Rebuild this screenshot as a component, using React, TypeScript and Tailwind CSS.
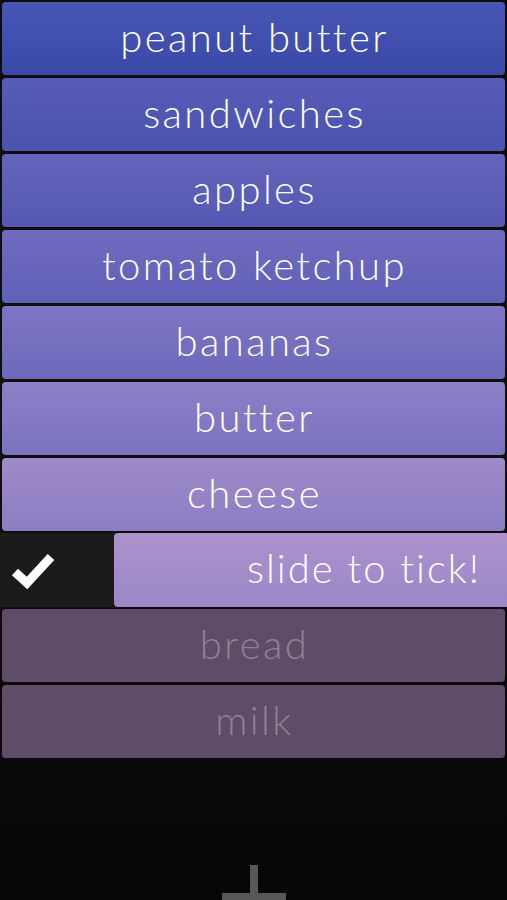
import React from "react";

const rows = [
  { label: "peanut butter", cls: "bg-linear-to-b from-[#4856b4] to-[#3a49a8]" },
  { label: "sandwiches", cls: "bg-linear-to-b from-[#575cb8] to-[#4a53ae]" },
  { label: "apples", cls: "bg-linear-to-b from-[#6563bb] to-[#5558b2]" },
  { label: "tomato ketchup", cls: "bg-linear-to-b from-[#706bbf] to-[#6060b7]" },
  { label: "bananas", cls: "bg-linear-to-b from-[#7e76c3] to-[#6d68bb]" },
  { label: "butter", cls: "bg-linear-to-b from-[#8c80c7] to-[#7b73bf]" },
  { label: "cheese", cls: "bg-linear-to-b from-[#a08ac9] to-[#8b7ec3]" },
];

const font = { fontFamily: "Lato, 'Open Sans', sans-serif" };

export default function App() {
  return (
    <div
      className="h-[900px] w-full overflow-hidden flex flex-col bg-linear-to-b from-[#0d0d0d] via-[#101010] to-[#060606]"
      style={font}
    >
      <div className="flex flex-col gap-[3px] pt-[2px]">
        {rows.map((r) => (
          <div
            key={r.label}
            className={`mx-[2px] h-[73px] rounded-[4px] flex items-center justify-center text-white text-[40px] font-light tracking-[2.4px] pl-[2px] pb-[4px] ${r.cls}`}
          >
            {r.label}
          </div>
        ))}
        <div className="flex h-[74px] -my-[1px]">
          <div className="w-[114px] bg-[#1b1b1b] flex items-center pl-[11px]">
            <svg width="46" height="40" viewBox="0 0 46 40">
              <path d="M4 22 L16 33 L40 7" fill="none" stroke="#ffffff" strokeWidth="9" strokeLinejoin="miter" />
            </svg>
          </div>
          <div className="flex-1 rounded-l-[4px] bg-linear-to-b from-[#ad92cd] to-[#9a88c8] flex items-center justify-end pr-[26px] pb-[4px] text-white text-[40px] font-light tracking-[2px]">
            slide to tick!
          </div>
        </div>
        {["bread", "milk"].map((l) => (
          <div
            key={l}
            className="mx-[2px] h-[73px] rounded-[4px] flex items-center justify-center bg-[#5e4c69] text-[#8b8392] text-[40px] font-light tracking-[2.4px] pl-[2px] pb-[4px]"
          >
            {l}
          </div>
        ))}
      </div>
      <div className="flex-1" />
      <div className="flex justify-center mb-[-29px]">
        <svg width="64" height="64" viewBox="0 0 64 64" className="ml-[1px]">
          <rect x="28" y="0" width="8" height="64" fill="#575757" />
          <rect x="0" y="28" width="64" height="8" fill="#575757" />
        </svg>
      </div>
    </div>
  );
}
